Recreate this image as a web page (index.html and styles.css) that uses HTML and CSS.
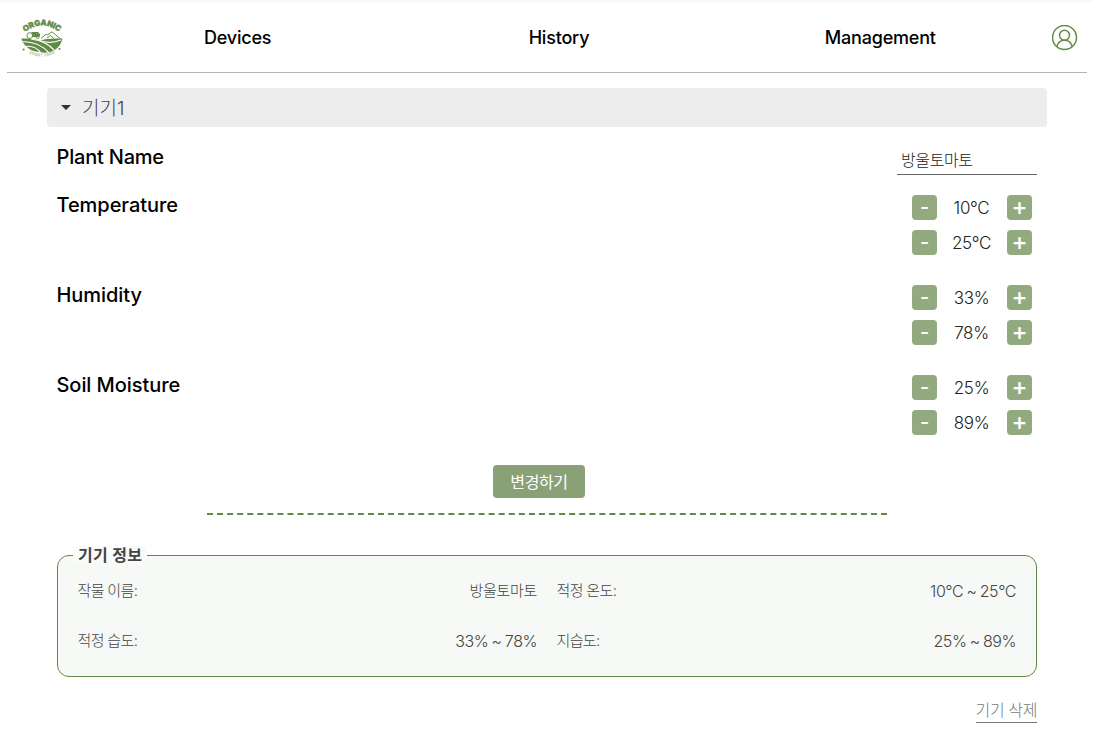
FILE: index.html
```html
<!DOCTYPE html>
<html lang="ko">
<head>
<meta charset="utf-8">
<title>Organic Smart Farm</title>
<link rel="stylesheet" href="styles.css">
</head>
<body>
<header class="header">
  <svg class="logo" viewBox="0 0 46 44" aria-label="Organic Smart Farm">
    <defs>
      <path id="arc-top" d="M5.600 16.500 Q23 2.500 40.400 16.500"/>
      <path id="arc-bottom" d="M8 36 Q23 45.500 38 36"/>
    </defs>
    <text class="logo-name"><textPath href="#arc-top" startOffset="50%" text-anchor="middle" textLength="37">ORGANIC</textPath></text>
    <g fill="none" stroke="#5f8b45" stroke-width="1">
      <circle cx="10.800" cy="19.600" r="2.900"/>
      <circle cx="18.500" cy="21.200" r="1.400"/>
      <path d="M22 22.500 L26.500 18.500 L28.500 19 L33 15.800 L35 17.500 L41 22.500 M28 22 L31.500 19.500 L35 22.500"/>
    </g>
    <path fill="#5f8b45" d="M12.500 16h7v5h-6zM19 17.500h2v3h-2z"/>
    <path fill="#5f8b45" d="M2.300 22.600 Q12 21.800 20 24.500 Q29 21.800 43.500 22.600 Q40 36.500 25 36.800 Q7 36.300 2.300 22.600Z"/>
    <g fill="none" stroke="#fff" stroke-width="1.200">
      <path d="M4 25.500 Q21 26 30 37"/>
      <path d="M6 30.500 Q16 29 22 37"/>
      <path d="M12 23 Q28 25.500 35 34"/>
      <path d="M20 24.300 Q31 28.500 42 24"/>
    </g>
    <circle cx="4.600" cy="33.600" r="1" fill="#5f8b45"/>
    <circle cx="40.500" cy="33" r="1" fill="#5f8b45"/>
    <text class="logo-sub"><textPath href="#arc-bottom" startOffset="50%" text-anchor="middle" textLength="28">SMART FARM</textPath></text>
  </svg>
  <nav class="nav">
    <a>Devices</a><a>History</a><a>Management</a>
  </nav>
  <svg class="user" viewBox="0 0 26 26" fill="none" stroke="#5f8b45" stroke-width="1.500">
    <circle cx="12.500" cy="12.500" r="12"/>
    <circle cx="12.500" cy="10.200" r="5"/>
    <path d="M4.900 21.500C5.800 17.300 8.700 15.200 12.500 15.200s6.700 2.100 7.600 6.300"/>
  </svg>
</header>
<main class="main">
  <div class="device"><i class="caret"></i><span>기기1</span></div>
  <section class="settings">
    <div class="row name"><h2>Plant Name</h2><div class="field">방울토마토</div></div>
    <div class="row"><h2>Temperature</h2>
      <div class="steppers">
        <div class="stepper"><button>-</button><span>10°C</span><button class="plus">+</button></div>
        <div class="stepper"><button>-</button><span>25°C</span><button class="plus">+</button></div>
      </div>
    </div>
    <div class="row"><h2>Humidity</h2>
      <div class="steppers">
        <div class="stepper"><button>-</button><span>33%</span><button class="plus">+</button></div>
        <div class="stepper"><button>-</button><span>78%</span><button class="plus">+</button></div>
      </div>
    </div>
    <div class="row"><h2>Soil Moisture</h2>
      <div class="steppers">
        <div class="stepper"><button>-</button><span>25%</span><button class="plus">+</button></div>
        <div class="stepper"><button>-</button><span>89%</span><button class="plus">+</button></div>
      </div>
    </div>
  </section>
  <button class="submit">변경하기</button>
  <div class="divider"></div>
  <fieldset class="info">
    <legend>기기 정보</legend>
    <dl class="facts">
      <div><dt>작물 이름:</dt><dd>방울토마토</dd></div>
      <div><dt>적정 온도:</dt><dd class="num">10°C ~ 25°C</dd></div>
      <div><dt>적정 습도:</dt><dd class="num">33% ~ 78%</dd></div>
      <div><dt>지습도:</dt><dd class="num">25% ~ 89%</dd></div>
    </dl>
  </fieldset>
  <a class="remove">기기 삭제</a>
</main>
</body>
</html>
```
FILE: styles.css
```css
* { box-sizing: border-box; }
body {
  margin: 0;
  border-top: 2px solid #fdf8f5;
  background: #fff;
  color: #000;
  font-family: Inter, "Noto Sans CJK KR", sans-serif;
}
.header {
  display: flex;
  align-items: center;
  height: 71px;
  margin: 0 6px 0 7px;
  padding: 1px 9px 0 12px;
  border-bottom: 1px solid #b5b5b5;
}
.logo { width: 46px; height: 44px; flex: none; }
.logo-name { font: 900 8px Inter, sans-serif; fill: #5f8b45; stroke: #5f8b45; stroke-width: .3px; }
.logo-sub { font: 400 4.2px Inter, sans-serif; fill: #8fac7c; }
.nav { display: flex; width: 964px; margin: 0 10px 0 12px; flex: none; }
.nav a { flex: 1; text-align: center; font-size: 18px; font-weight: 500; line-height: 24px; letter-spacing: -.2px; padding-top: 1px; }
.user { width: 26px; height: 26px; flex: none; margin-left: 1px; }

.main { display: flex; flex-direction: column; width: 1000px; margin: 15px 0 0 47px; }
.device {
  display: flex;
  align-items: center;
  gap: 11px;
  height: 39px;
  padding: 0 0 2px 14px;
  border-radius: 4px;
  background: #ededed;
  color: #444;
  font-size: 19px;
  font-weight: 300;
}
.caret { margin-top: 2px; border: 5px solid transparent; border-top-color: #333; border-bottom: 0; }
.settings { padding: 16px 10px 0; }
.row { display: flex; justify-content: space-between; height: 90px; }
.row.name { height: 48px; }
.row h2 { margin: 0 0 0 -.5px; font-size: 20px; font-weight: 500; line-height: 28px; letter-spacing: -.06px; }
.row.name h2 { letter-spacing: -.2px; }
.field {
  width: 140px;
  height: 32px;
  padding: 4px 4px 0;
  border-bottom: 1px solid #666;
  color: #222;
  font-size: 16px;
  font-weight: 300;
  line-height: 26px;
  letter-spacing: -.4px;
}
.steppers { display: flex; flex-direction: column; gap: 10px; padding: 4px 5px 0 0; }
.stepper { display: flex; width: 120px; height: 25px; align-items: center; justify-content: space-between; }
.stepper span { padding: 1px 1px 0 0; color: #222; font-size: 17px; font-weight: 300; line-height: 25px; letter-spacing: -.3px; }
.stepper button {
  width: 25px;
  height: 25px;
  padding: 0;
  border: 0;
  border-radius: 4px;
  background: #93a980;
  color: #fff;
  font: 500 20px/25px Inter, sans-serif;
}
.stepper .plus { padding-bottom: 2px; font-size: 24px; line-height: 23px; }
.submit {
  align-self: center;
  width: 92px;
  height: 33px;
  margin: 4px 16px 0 0;
  padding: 0;
  border: 0;
  border-radius: 4px;
  background: #8aa077;
  color: #fff;
  font: 400 16px/31px "Noto Sans CJK KR", sans-serif;
  letter-spacing: -.4px;
}
.divider {
  width: 680px;
  margin: 15px 0 0 160px;
  border-top: 2px dashed #5f8b45;
}
.info {
  height: 131px;
  margin: 31px 10px 0;
  padding: 0 20px;
  border: 1px solid #5f8b45;
  border-radius: 12px;
  background: #f6f9f6;
  color: #444;
}
.info legend {
  height: 18px;
  margin-left: -5px;
  padding: 0 5px;
  background: #fafafa;
  font-size: 16px;
  font-weight: 700;
  line-height: 18px;
  letter-spacing: .3px;
}
.facts { display: grid; grid-template-columns: 459px 459px; column-gap: 20px; grid-auto-rows: 50px; margin: 2px 0 0; }
.facts div { display: flex; justify-content: space-between; font-size: 15px; font-weight: 300; line-height: 50px; letter-spacing: -.3px; }
.facts dt { margin-left: -.5px; letter-spacing: -.65px; }
.facts dd { margin: 0; }
.facts .num { font-size: 16px; letter-spacing: -.45px; word-spacing: -.8px; }
.remove {
  align-self: flex-end;
  height: 25px;
  margin: 21px 10px 0 0;
  border-bottom: 1px solid #777;
  color: #777;
  font-size: 16px;
  font-weight: 300;
  line-height: 24px;
  letter-spacing: -.4px;
}
```
